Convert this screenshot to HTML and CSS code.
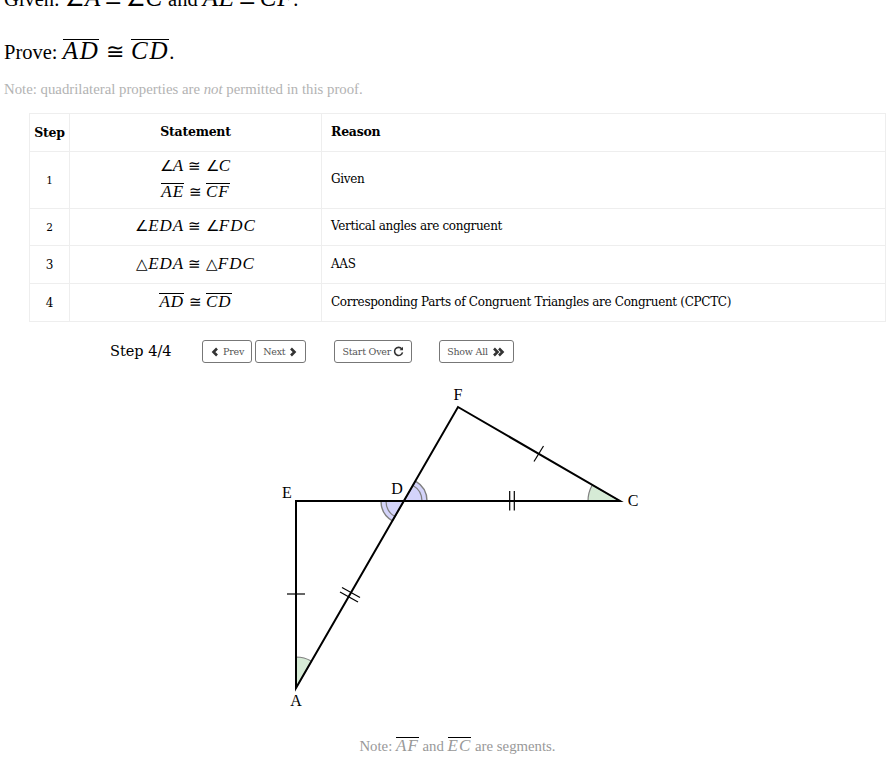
FILE: index.html
```html
<!DOCTYPE html>
<html lang="en">
<head>
    <meta charset="UTF-8">
    <meta name="viewport" content="width=device-width, initial-scale=1.0">
    <title>Proof</title>
    <link rel="stylesheet" href="styles.css">
</head>
<body>
    <p class="given">Given: <span class="math"><span class="sym">∠</span>A <span class="sym">≅</span> <span class="sym">∠</span>C</span> and <span class="math"><span class="bar">AE</span> <span class="sym">≅</span> <span class="bar">CF</span></span>.</p>
    <p class="prove">Prove: <span class="math"><span class="bar">AD</span> <span class="sym">≅</span> <span class="bar">CD</span></span>.</p>
    <p class="note">Note: quadrilateral properties are <em>not</em> permitted in this proof.</p>

    <div class="proof">
        <table class="proof-table">
            <thead>
                <tr>
                    <th class="col-step">Step</th>
                    <th class="col-statement">Statement</th>
                    <th class="col-reason">Reason</th>
                </tr>
            </thead>
            <tbody>
                <tr>
                    <td class="col-step num-low">1</td>
                    <td class="col-statement stack-cell">
                        <div class="math stack"><span class="sym">∠</span>A <span class="sym">≅</span> <span class="sym">∠</span>C</div>
                        <div class="math stack"><span class="bar">AE</span> <span class="sym">≅</span> <span class="bar">CF</span></div>
                    </td>
                    <td class="col-reason">Given</td>
                </tr>
                <tr class="row-short">
                    <td class="col-step num-low">2</td>
                    <td class="col-statement"><span class="math"><span class="sym">∠</span>EDA <span class="sym">≅</span> <span class="sym">∠</span>FDC</span></td>
                    <td class="col-reason">Vertical angles are congruent</td>
                </tr>
                <tr>
                    <td class="col-step">3</td>
                    <td class="col-statement"><span class="math"><span class="sym">△</span>EDA <span class="sym">≅</span> <span class="sym">△</span>FDC</span></td>
                    <td class="col-reason">AAS</td>
                </tr>
                <tr>
                    <td class="col-step">4</td>
                    <td class="col-statement"><span class="math"><span class="bar">AD</span> <span class="sym">≅</span> <span class="bar">CD</span></span></td>
                    <td class="col-reason">Corresponding Parts of Congruent Triangles are Congruent (CPCTC)</td>
                </tr>
            </tbody>
        </table>

        <div class="controls">
            <span class="step-count">Step 4/4</span>
            <div class="btn-group">
                <a href="#" class="btn">
                    <svg class="icon" viewBox="0 0 10 10"><path d="M7 1.500 L3.500 5 L7 8.500" /></svg>Prev
                </a>
                <a href="#" class="btn btn-next">Next
                    <svg class="icon" viewBox="0 0 10 10"><path d="M3 1.500 L6.500 5 L3 8.500" /></svg>
                </a>
            </div>
            <a href="#" class="btn btn-start">Start Over
                <svg class="icon icon-redo" viewBox="0 0 12 12"><path d="M9.600 3.200 A4.400 4.400 0 1 0 10.400 7" /><path class="fill" d="M10.900 0.800 V4.600 H7.100 Z" /></svg>
            </a>
            <a href="#" class="btn btn-all">Show All
                <svg class="icon icon-wide" viewBox="0 0 15 10"><path d="M3 1.500 L6.500 5 L3 8.500" /><path d="M8 1.500 L11.500 5 L8 8.500" /></svg>
            </a>
        </div>

        <svg class="diagram" viewBox="0 0 420 350" width="420" height="350">
            <!-- origin of this drawing is at page x=248, y=380 -->
            <g class="angle-green">
                <path d="M48 277 A31 31 0 0 1 63.500 281.200 L48 308 Z" />
                <path d="M372 121 L340 121 A32 32 0 0 1 344.300 105 Z" />
            </g>
            <g class="angle-blue">
                <path d="M156 121 L179 121 A23 23 0 0 0 167.500 101.100 Z" />
                <path d="M156 121 L133 121 A23 23 0 0 0 144.500 140.900 Z" />
            </g>
            <g class="arc-line">
                <path d="M174 121 A18 18 0 0 0 165 105.400" />
                <path d="M138 121 A18 18 0 0 0 147 136.600" />
            </g>
            <g class="edges">
                <path d="M48 121 H372 L210 27 L48 308 Z" />
            </g>
            <g class="ticks">
                <path d="M39 214 H57" />
                <path d="M94 207.500 L112 217.500" />
                <path d="M92 212 L110 222" />
                <path d="M261.700 111 V130.500" />
                <path d="M266.300 111 V130.500" />
                <path d="M286 81.500 L295.500 66" />
            </g>
            <text x="210" y="20">F</text>
            <text x="385" y="126">C</text>
            <text x="149" y="114">D</text>
            <text x="39" y="118">E</text>
            <text x="48" y="326">A</text>
        </svg>

        <p class="figure-note">Note: <span class="math"><span class="bar">AF</span></span> and <span class="math"><span class="bar">EC</span></span> are segments.</p>
    </div>
</body>
</html>
```

FILE: styles.css
```css
body, html {
    margin: 0;
    padding: 0;
    background: white;
    color: black;
    font-family: "Liberation Serif", serif;
    height: 767px;
    overflow: hidden;
}

body {
    padding-left: 4px;
}

p {
    margin: 0;
}

.math {
    font-family: "Liberation Serif", serif;
    font-style: italic;
    font-size: 17px;
    letter-spacing: 0.06em;
    word-spacing: -0.05em;
}

.sym {
    font-style: normal;
    font-size: 0.88em;
    font-weight: 400;
    letter-spacing: 0;
}

.bar {
    display: inline-block;
    line-height: 0.9;
    border-top: 1px solid black;
}

.given {
    font-size: 20.500px;
    line-height: 26px;
    margin-top: -15px;
}

.prove {
    font-size: 20.500px;
    line-height: 26px;
    margin-top: 26px;
}

.given .math,
.prove .math {
    font-size: 25px;
    letter-spacing: 0.07em;
}

.given .math {
    letter-spacing: 0.03em;
    word-spacing: -0.14em;
}

.note {
    font-size: 14.800px;
    line-height: 18px;
    color: #b3b3b3;
    margin-top: 15px;
}

.proof {
    margin-left: 25px;
    width: 857px;
    margin-top: 15px;
}

.proof-table {
    width: 857px;
    border-collapse: collapse;
    table-layout: fixed;
    font-family: "DejaVu Serif", serif;
    font-size: 12px;
    letter-spacing: -0.32px;
}

.proof-table th,
.proof-table td {
    border: 1px solid #eeeeee;
    padding: 0 9px 2px;
    height: 35px;
    text-align: left;
}

.proof-table .row-short td {
    height: 34px;
}

.proof-table th {
    font-size: 12.500px;
    letter-spacing: -0.25px;
}

.proof-table .col-step {
    width: 39px;
    padding: 0;
    height: 37px;
    text-align: center;
}

.proof-table .row-short .col-step {
    height: 36px;
}

.proof-table .num-low {
    font-size: 10.500px;
}

.proof-table .col-statement {
    width: 251px;
    padding: 0 0 2px;
    text-align: center;
}

.proof-table .stack-cell {
    padding: 1px 0 3px;
}

.stack {
    line-height: 26px;
}

.controls {
    display: flex;
    align-items: center;
    padding-left: 81px;
    margin-top: 17px;
    height: 24px;
    font-family: "DejaVu Serif", serif;
}

.step-count {
    font-size: 14.500px;
    width: 92px;
}

.btn-group {
    display: flex;
    gap: 3px;
}

.btn {
    display: flex;
    align-items: center;
    gap: 3px;
    height: 21px;
    margin-top: 1px;
    padding: 0 7px;
    font-size: 9.500px;
    letter-spacing: -0.2px;
    color: #555555;
    text-decoration: none;
    border: 1px solid #777777;
    border-radius: 3px;
}

.btn-start {
    margin-left: 28px;
    gap: 2px;
}

.btn-all {
    margin-left: 27px;
}

.icon {
    width: 10px;
    height: 10px;
    fill: none;
    stroke: #333333;
    stroke-width: 2.600;
}

.icon-wide {
    width: 15px;
}

.icon-redo {
    width: 11px;
    height: 11px;
    stroke-width: 1.700;
}

.icon-redo .fill {
    fill: #333333;
    stroke: none;
}

.diagram {
    display: block;
    margin: 17px auto 0;
}

.diagram text {
    font-family: "Liberation Serif", serif;
    font-size: 16px;
    text-anchor: middle;
    fill: black;
}

.angle-green path {
    fill: #d6ebd6;
    stroke: #808080;
    stroke-width: 1.200;
}

.angle-blue path {
    fill: #d4d4fa;
    stroke: #808080;
    stroke-width: 1.400;
}

.arc-line path {
    fill: none;
    stroke: #808080;
    stroke-width: 1.200;
}

.edges path {
    fill: none;
    stroke: black;
    stroke-width: 2;
    stroke-linejoin: miter;
}

.ticks path {
    fill: none;
    stroke: black;
    stroke-width: 1.200;
}

.figure-note {
    font-size: 14.800px;
    color: #999999;
    text-align: center;
    line-height: 20px;
    margin-top: 6px;
}
```
